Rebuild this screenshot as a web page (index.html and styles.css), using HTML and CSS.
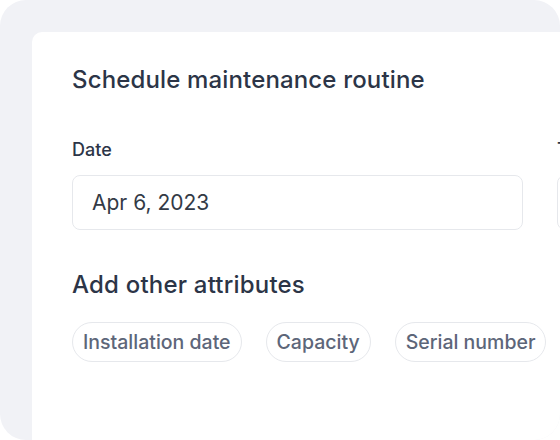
FILE: index.html
```html
<!DOCTYPE html>
<html>
<head>
<meta charset="utf-8">
<link rel="stylesheet" href="styles.css">
</head>
<body>
<div class="panel">
  <div class="card">
    <h1 class="title">Schedule maintenance routine</h1>
    <div class="fields">
      <div class="field">
        <div class="label">Date</div>
        <div class="input">Apr 6, 2023</div>
      </div>
      <div class="field">
        <div class="label">Time</div>
        <div class="input">9:00 AM</div>
      </div>
    </div>
    <h2 class="subtitle">Add other attributes</h2>
    <div class="chips">
      <span class="chip">Installation date</span>
      <span class="chip">Capacity</span>
      <span class="chip">Serial number</span>
    </div>
  </div>
</div>
</body>
</html>
```
FILE: styles.css
```css
html, body {
  margin: 0;
  padding: 0;
  background: #ffffff;
}
body {
  width: 560px;
  height: 440px;
  overflow: hidden;
  font-family: Inter, "Noto Sans", sans-serif;
}
.panel {
  width: 560px;
  height: 440px;
  background: #f1f2f6;
  border-radius: 26px;
  overflow: hidden;
  padding: 32px 0 0 32px;
  box-sizing: border-box;
}
.card {
  width: 700px;
  height: 600px;
  background: #ffffff;
  border-radius: 10px;
  padding: 33px 40px 0 40px;
  box-sizing: border-box;
}
.title {
  margin: 0;
  font-size: 24px;
  line-height: 30px;
  font-weight: 500;
  color: #2c3547;
  letter-spacing: 0.15px;
}
.fields {
  display: flex;
  gap: 34px;
  margin-top: 44px;
}
.field {
  width: 451px;
  flex: none;
}
.label {
  font-size: 18px;
  line-height: 22px;
  font-weight: 500;
  color: #2c3547;
}
.input {
  margin-top: 14px;
  height: 55px;
  box-sizing: border-box;
  border: 1px solid #e6e8ec;
  border-radius: 8px;
  padding: 0 19px;
  display: flex;
  align-items: center;
  font-size: 21px;
  color: #333a46;
}
.subtitle {
  margin: 40px 0 0 0;
  font-size: 24px;
  line-height: 30px;
  font-weight: 500;
  color: #2c3547;
  letter-spacing: 0.2px;
}
.chips {
  display: flex;
  gap: 24px;
  margin-top: 22px;
}
.chip {
  height: 40px;
  box-sizing: border-box;
  border: 1px solid #e6e8ec;
  border-radius: 20px;
  padding: 0 10px;
  display: flex;
  align-items: center;
  font-size: 19.5px;
  font-weight: 500;
  color: #5d6679;
}
```
